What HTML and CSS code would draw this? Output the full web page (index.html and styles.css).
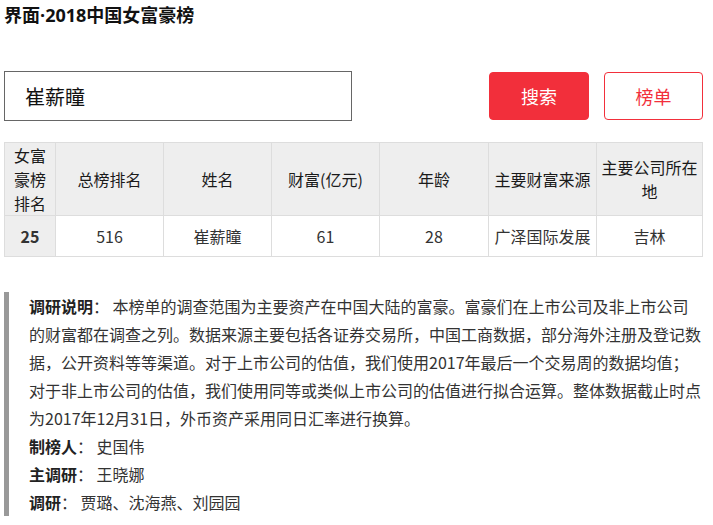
FILE: index.html
```html
<!DOCTYPE html>
<html lang="zh-CN">
<head>
    <meta charset="UTF-8">
    <meta name="viewport" content="width=device-width, initial-scale=1.0">
    <title>界面·2018中国女富豪榜</title>
    <link rel="stylesheet" href="styles.css">
</head>
<body>
    <div class="page">
        <h1 class="title">界面·2018中国女富豪榜</h1>

        <div class="search">
            <input type="text" class="search-input" value="崔薪瞳">
            <button class="btn btn-search">搜索</button>
            <button class="btn btn-list">榜单</button>
        </div>

        <table class="rank">
            <colgroup>
                <col style="width:51px">
                <col style="width:108px">
                <col style="width:108px">
                <col style="width:108px">
                <col style="width:109px">
                <col style="width:108px">
                <col>
            </colgroup>
            <thead>
                <tr>
                    <th class="first">女富豪榜排名</th>
                    <th>总榜排名</th>
                    <th>姓名</th>
                    <th>财富(亿元)</th>
                    <th>年龄</th>
                    <th>主要财富来源</th>
                    <th>主要公司所在地</th>
                </tr>
            </thead>
            <tbody>
                <tr>
                    <td class="first">25</td>
                    <td>516</td>
                    <td>崔薪瞳</td>
                    <td>61</td>
                    <td>28</td>
                    <td>广泽国际发展</td>
                    <td>吉林</td>
                </tr>
            </tbody>
        </table>

        <div class="note">
            <p><b>调研说明</b>： 本榜单的调查范围为主要资产在中国大陆的富豪。富豪们在上市公司及非上市公司的财富都在调查之列。数据来源主要包括各证券交易所，中国工商数据，部分海外注册及登记数据，公开资料等等渠道。对于上市公司的估值，我们使用2017年最后一个交易周的数据均值；对于非上市公司的估值，我们使用同等或类似上市公司的估值进行拟合运算。整体数据截止时点为2017年12月31日，外币资产采用同日汇率进行换算。</p>
            <p><b>制榜人</b>： 史国伟</p>
            <p><b>主调研</b>： 王晓娜</p>
            <p><b>调研</b>： 贾璐、沈海燕、刘园园</p>
        </div>
    </div>
</body>
</html>
```

FILE: styles.css
```css
body {
    margin: 0;
    font-family: "Noto Sans CJK SC", "Noto Sans", sans-serif;
    color: #333;
    background: #fff;
}

.page {
    padding: 3px 10px 0 4px;
}

.title {
    margin: 0;
    font-family: "Open Sans", "Noto Sans CJK SC", sans-serif;
    font-size: 18px;
    line-height: 24px;
    font-weight: bold;
    color: #111;
}

/* search row */
.search {
    display: flex;
    align-items: center;
    margin-top: 44px;
}

.search-input {
    width: 348px;
    height: 50px;
    box-sizing: border-box;
    border: 1px solid #666;
    padding: 0 20px;
    font-family: inherit;
    font-size: 20px;
    color: #111;
    margin-right: auto;
    outline: none;
}

.btn {
    height: 48px;
    box-sizing: border-box;
    border-radius: 4px;
    font-family: inherit;
    font-size: 18px;
    cursor: pointer;
}

.btn-search {
    width: 100px;
    background-color: #f22f3b;
    border: 1px solid #f22f3b;
    color: #fff;
}

.btn-list {
    width: 99px;
    margin-left: 15px;
    background-color: #fff;
    border: 1px solid #f22f3b;
    color: #f22f3b;
}

/* table */
.rank {
    width: 100%;
    margin-top: 21px;
    border-collapse: collapse;
    table-layout: fixed;
    font-size: 16px;
    line-height: 24px;
}

.rank th,
.rank td {
    border: 1px solid #ddd;
    text-align: center;
    vertical-align: middle;
    padding: 0 3px;
    font-weight: normal;
}

.rank th {
    background-color: #eee;
    color: #1a1a1a;
    height: 72px;
}

.rank td {
    height: 40px;
    color: #333;
}

.rank .first {
    background-color: #eee;
    padding: 0 9px;
}

.rank td.first {
    font-weight: bold;
}

/* note */
.note {
    margin-top: 35px;
    border-left: 5px solid #999;
    padding-left: 20px;
    font-size: 16px;
    line-height: 28px;
}

.note p {
    margin: 0;
}

.note b {
    color: #222;
}
```
